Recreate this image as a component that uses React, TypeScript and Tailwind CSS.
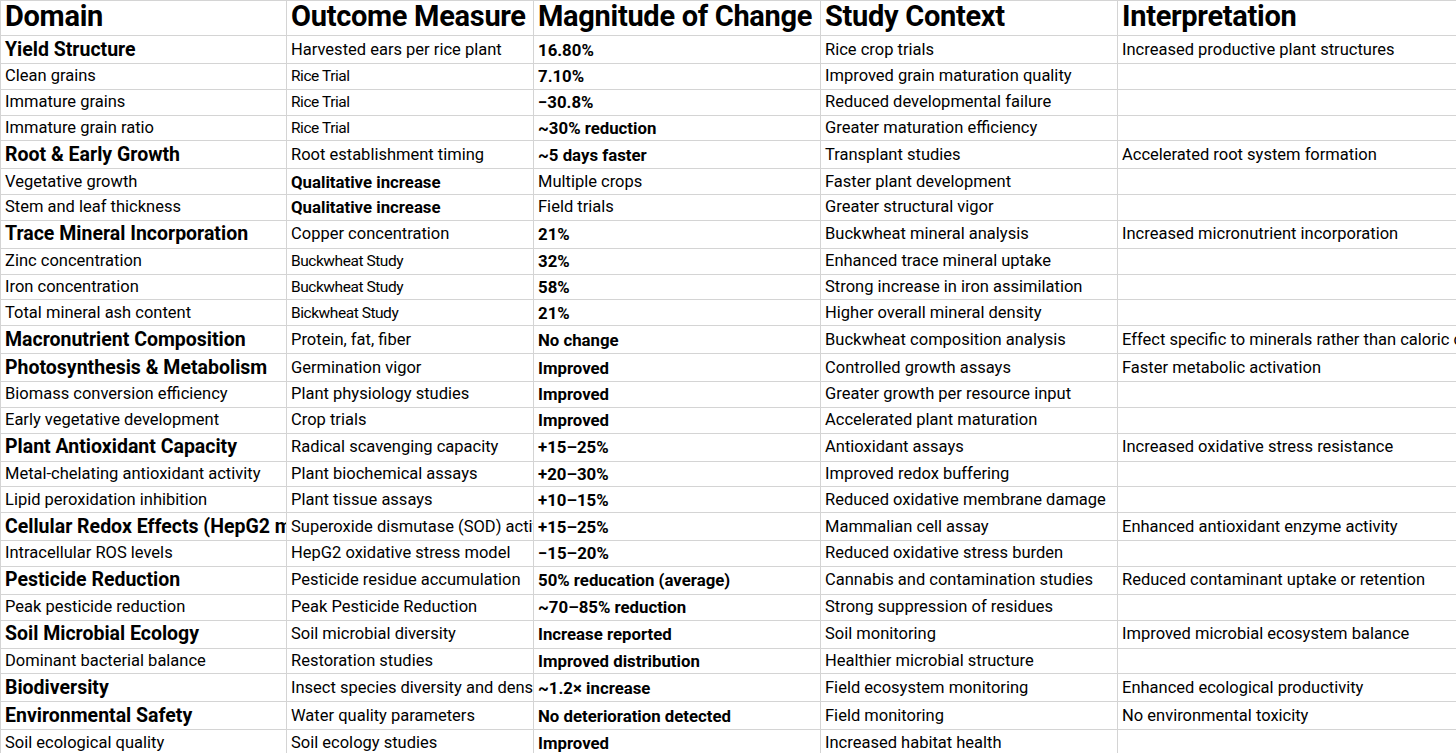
import React from "react";

type Row = {
  domain: string;
  outcome: string;
  magnitude: string;
  context: string;
  interp?: string;
  section?: boolean;
  outcomeStyle?: "bold" | "narrow";
  magPlain?: boolean;
};

const ROWS: Row[] = [
  { domain: "Yield Structure", outcome: "Harvested ears per rice plant", magnitude: "16.80%", context: "Rice crop trials", interp: "Increased productive plant structures", section: true },
  { domain: "Clean grains", outcome: "Rice Trial", magnitude: "7.10%", context: "Improved grain maturation quality", outcomeStyle: "narrow" },
  { domain: "Immature grains", outcome: "Rice Trial", magnitude: "−30.8%", context: "Reduced developmental failure", outcomeStyle: "narrow" },
  { domain: "Immature grain ratio", outcome: "Rice Trial", magnitude: "~30% reduction", context: "Greater maturation efficiency", outcomeStyle: "narrow" },
  { domain: "Root & Early Growth", outcome: "Root establishment timing", magnitude: "~5 days faster", context: "Transplant studies", interp: "Accelerated root system formation", section: true },
  { domain: "Vegetative growth", outcome: "Qualitative increase", magnitude: "Multiple crops", context: "Faster plant development", outcomeStyle: "bold", magPlain: true },
  { domain: "Stem and leaf thickness", outcome: "Qualitative increase", magnitude: "Field trials", context: "Greater structural vigor", outcomeStyle: "bold", magPlain: true },
  { domain: "Trace Mineral Incorporation", outcome: "Copper concentration", magnitude: "21%", context: "Buckwheat mineral analysis", interp: "Increased micronutrient incorporation", section: true },
  { domain: "Zinc concentration", outcome: "Buckwheat Study", magnitude: "32%", context: "Enhanced trace mineral uptake", outcomeStyle: "narrow" },
  { domain: "Iron concentration", outcome: "Buckwheat Study", magnitude: "58%", context: "Strong increase in iron assimilation", outcomeStyle: "narrow" },
  { domain: "Total mineral ash content", outcome: "Bickwheat Study", magnitude: "21%", context: "Higher overall mineral density", outcomeStyle: "narrow" },
  { domain: "Macronutrient Composition", outcome: "Protein, fat, fiber", magnitude: "No change", context: "Buckwheat composition analysis", interp: "Effect specific to minerals rather than caloric content", section: true },
  { domain: "Photosynthesis & Metabolism", outcome: "Germination vigor", magnitude: "Improved", context: "Controlled growth assays", interp: "Faster metabolic activation", section: true },
  { domain: "Biomass conversion efficiency", outcome: "Plant physiology studies", magnitude: "Improved", context: "Greater growth per resource input" },
  { domain: "Early vegetative development", outcome: "Crop trials", magnitude: "Improved", context: "Accelerated plant maturation" },
  { domain: "Plant Antioxidant Capacity", outcome: "Radical scavenging capacity", magnitude: "+15–25%", context: "Antioxidant assays", interp: "Increased oxidative stress resistance", section: true },
  { domain: "Metal-chelating antioxidant activity", outcome: "Plant biochemical assays", magnitude: "+20–30%", context: "Improved redox buffering" },
  { domain: "Lipid peroxidation inhibition", outcome: "Plant tissue assays", magnitude: "+10–15%", context: "Reduced oxidative membrane damage" },
  { domain: "Cellular Redox Effects (HepG2 model)", outcome: "Superoxide dismutase (SOD) activity", magnitude: "+15–25%", context: "Mammalian cell assay", interp: "Enhanced antioxidant enzyme activity", section: true },
  { domain: "Intracellular ROS levels", outcome: "HepG2 oxidative stress model", magnitude: "−15–20%", context: "Reduced oxidative stress burden" },
  { domain: "Pesticide Reduction", outcome: "Pesticide residue accumulation", magnitude: "50% reducation (average)", context: "Cannabis and contamination studies", interp: "Reduced contaminant uptake or retention", section: true },
  { domain: "Peak pesticide reduction", outcome: "Peak Pesticide Reduction", magnitude: "~70–85% reduction", context: "Strong suppression of residues" },
  { domain: "Soil Microbial Ecology", outcome: "Soil microbial diversity", magnitude: "Increase reported", context: "Soil monitoring", interp: "Improved microbial ecosystem balance", section: true },
  { domain: "Dominant bacterial balance", outcome: "Restoration studies", magnitude: "Improved distribution", context: "Healthier microbial structure" },
  { domain: "Biodiversity", outcome: "Insect species diversity and density", magnitude: "~1.2× increase", context: "Field ecosystem monitoring", interp: "Enhanced ecological productivity", section: true },
  { domain: "Environmental Safety", outcome: "Water quality parameters", magnitude: "No deterioration detected", context: "Field monitoring", interp: "No environmental toxicity", section: true },
  { domain: "Soil ecological quality", outcome: "Soil ecology studies", magnitude: "Improved", context: "Increased habitat health" },
];

const HEADERS = ["Domain", "Outcome Measure", "Magnitude of Change", "Study Context", "Interpretation"];

function Cell({ children, className = "" }: { children?: React.ReactNode; className?: string }) {
  return (
    <td className="border border-[#d4d4d4] p-0 align-middle">
      <div className={"overflow-hidden whitespace-nowrap pl-[4px] " + className}>{children}</div>
    </td>
  );
}

export default function App() {
  return (
    <div className="h-[753px] w-[1456px] overflow-hidden bg-white font-['Roboto',sans-serif] text-black">
      <table className="w-[1500px] table-fixed border-collapse">
        <colgroup>
          <col className="w-[286px]" />
          <col className="w-[247px]" />
          <col className="w-[287px]" />
          <col className="w-[297px]" />
          <col className="w-[383px]" />
        </colgroup>
        <thead>
          <tr className="h-[35px]">
            {HEADERS.map((h) => (
              <Cell key={h} className="-translate-y-[2px] text-[29px] font-bold leading-[33px] tracking-[-0.3px]">
                {h}
              </Cell>
            ))}
          </tr>
        </thead>
        <tbody>
          {ROWS.map((r) => (
            <tr key={r.domain} className={r.section ? "h-[28px]" : "h-[25.75px]"}>
              <Cell className={r.section ? "text-[19.5px] font-bold leading-[26px]" : "text-[16.5px] leading-[24px]"}>
                {r.domain}
              </Cell>
              <Cell
                className={
                  r.outcomeStyle === "bold"
                    ? "text-[16.8px] font-bold leading-[24px]"
                    : r.outcomeStyle === "narrow"
                    ? "text-[15.5px] leading-[24px] tracking-[-0.45px]"
                    : "text-[16.5px] leading-[24px]"
                }
              >
                {r.outcome}
              </Cell>
              <Cell className={r.magPlain ? "text-[16.5px] leading-[24px]" : "text-[16.8px] font-bold leading-[24px]"}>
                {r.magnitude}
              </Cell>
              <Cell className="text-[16.5px] leading-[24px]">{r.context}</Cell>
              <Cell className="text-[16.5px] leading-[24px]">{r.interp}</Cell>
            </tr>
          ))}
        </tbody>
      </table>
    </div>
  );
}
